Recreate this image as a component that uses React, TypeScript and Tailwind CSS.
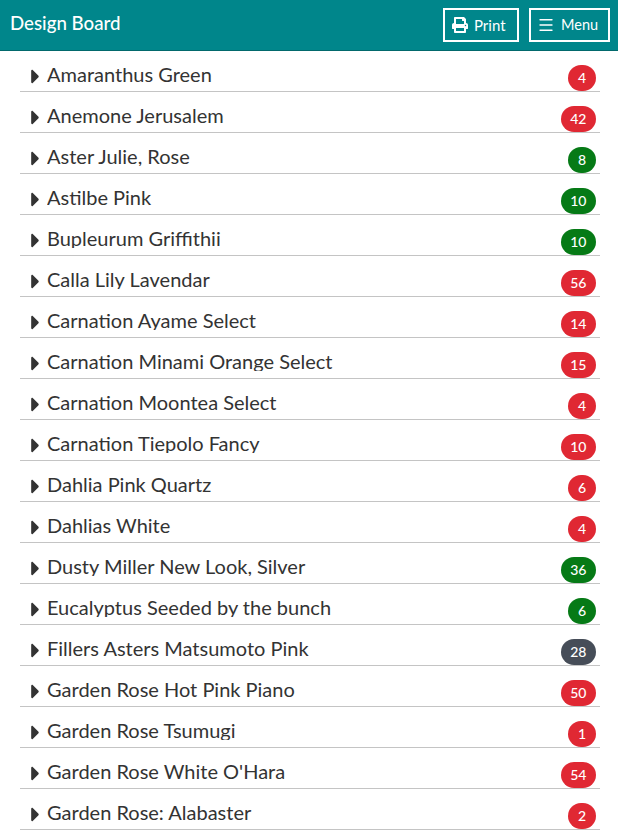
import { FaCaretRight, FaPrint } from 'react-icons/fa'
import { Menu } from 'lucide-react'

const items = [
    { name: 'Amaranthus Green', count: 4, color: 'bg-[#e02833]' },
    { name: 'Anemone Jerusalem', count: 42, color: 'bg-[#e02833]' },
    { name: 'Aster Julie, Rose', count: 8, color: 'bg-[#067a16]' },
    { name: 'Astilbe Pink', count: 10, color: 'bg-[#067a16]' },
    { name: 'Bupleurum Griffithii', count: 10, color: 'bg-[#067a16]' },
    { name: 'Calla Lily Lavendar', count: 56, color: 'bg-[#e02833]' },
    { name: 'Carnation Ayame Select', count: 14, color: 'bg-[#e02833]' },
    { name: 'Carnation Minami Orange Select', count: 15, color: 'bg-[#e02833]' },
    { name: 'Carnation Moontea Select', count: 4, color: 'bg-[#e02833]' },
    { name: 'Carnation Tiepolo Fancy', count: 10, color: 'bg-[#e02833]' },
    { name: 'Dahlia Pink Quartz', count: 6, color: 'bg-[#e02833]' },
    { name: 'Dahlias White', count: 4, color: 'bg-[#e02833]' },
    { name: 'Dusty Miller New Look, Silver', count: 36, color: 'bg-[#067a16]' },
    { name: 'Eucalyptus Seeded by the bunch', count: 6, color: 'bg-[#067a16]' },
    { name: 'Fillers Asters Matsumoto Pink', count: 28, color: 'bg-[#464d58]' },
    { name: 'Garden Rose Hot Pink Piano', count: 50, color: 'bg-[#e02833]' },
    { name: 'Garden Rose Tsumugi', count: 1, color: 'bg-[#e02833]' },
    { name: "Garden Rose White O'Hara", count: 54, color: 'bg-[#e02833]' },
    { name: 'Garden Rose: Alabaster', count: 2, color: 'bg-[#e02833]' },
]

function Row({ name, count, color }: { name: string; count: number; color: string }) {
    return (
        <div className="flex h-[41px] border-b border-[#c4c4c4]">
            <FaCaretRight className="mt-[14px] ml-[8px] w-[15px] h-[23px] shrink-0 text-[#333]" />
            {/* descenders get cut off in the original, so the box is shorter than its line */}
            <div className="ml-[4px] mt-[8px] h-[25px] flex-1 overflow-hidden text-[20px] leading-[30px] text-[#333]">{name}</div>
            <div className={`mt-[14px] mr-[4px] flex h-[26px] min-w-[28px] items-center justify-center rounded-full px-[9.5px] pb-[1px] text-[14px] font-medium text-white ${color}`}>
                {count}
            </div>
        </div>
    )
}

export default function App() {
    return (
        <div className="h-[833px] overflow-hidden bg-white font-['Lato',sans-serif]">
            <header className="flex h-[51px] items-center justify-between border-b border-[#02696c] bg-[#00868b] pl-[10px] pr-[8px]">
                <h1 className="pb-[3px] text-[18.7px] font-medium text-white">Design Board</h1>
                <div className="flex gap-[10px]">
                    <button className="flex h-[34px] w-[76px] items-center gap-[6px] border-2 border-white pl-[7px] text-[15px] text-white">
                        <FaPrint className="h-[16px] w-[16px]" />
                        Print
                    </button>
                    <button className="flex h-[34px] w-[81px] items-center gap-[6px] border-2 border-white pl-[6px] text-[14.5px] text-white">
                        <Menu className="h-[18px] w-[18px]" strokeWidth={1.75} />
                        Menu
                    </button>
                </div>
            </header>
            <div className="pl-[20px] pr-[18px]">
                {items.map((item) => (
                    <Row key={item.name} {...item} />
                ))}
            </div>
        </div>
    )
}
